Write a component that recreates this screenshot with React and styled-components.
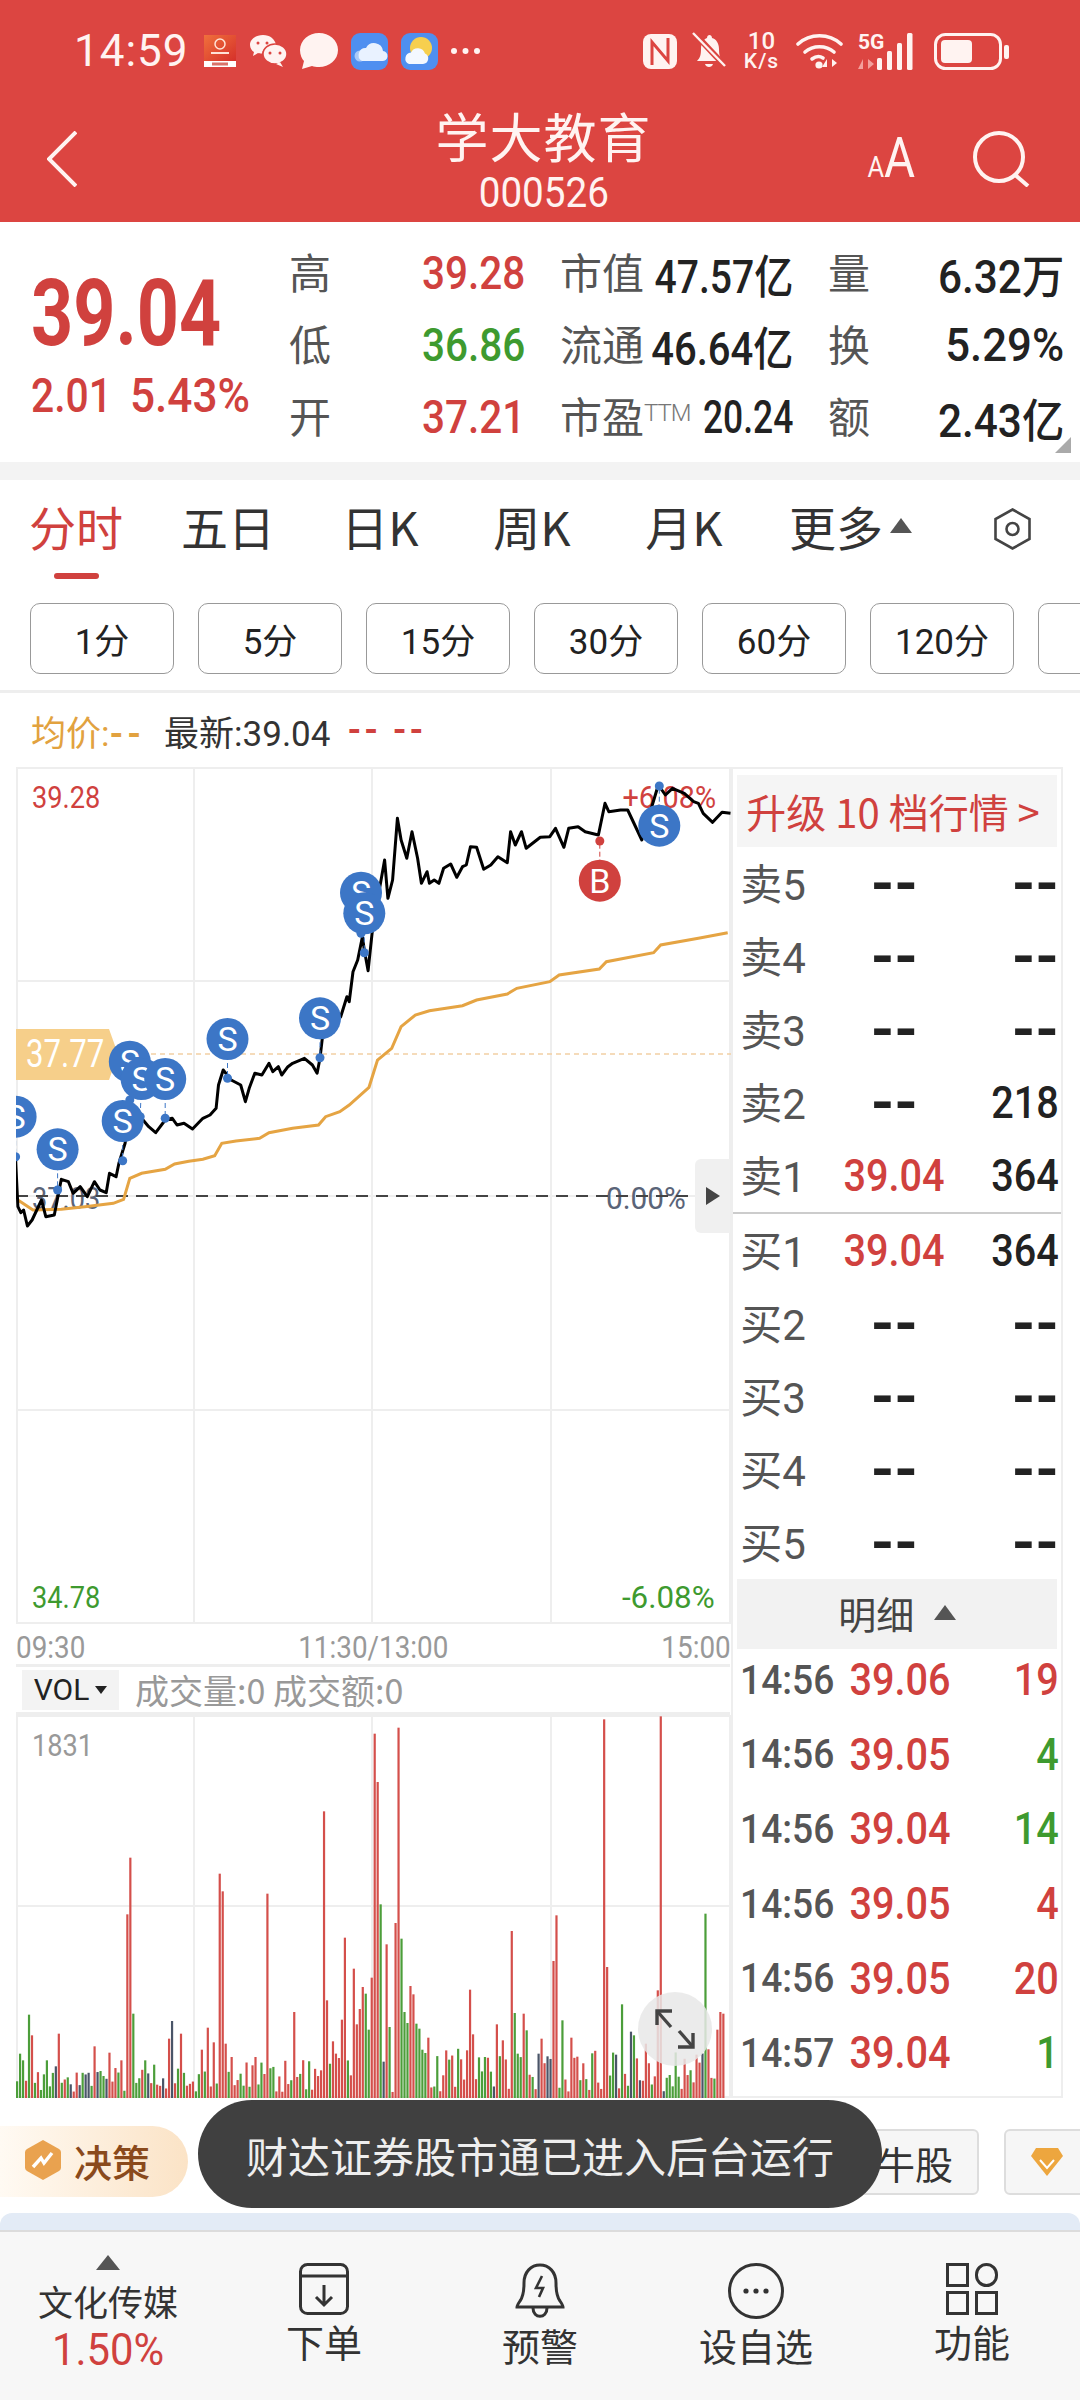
import React from 'react';
import styled, { createGlobalStyle, css } from 'styled-components';

const RED = '#d0413e';
const GREEN = '#3e9a2f';
const cjk = '"Noto Sans CJK SC", "Roboto", sans-serif';
const num = '"Roboto", "Noto Sans CJK SC", sans-serif';

// the app's digits are a condensed DIN face, so Roboto gets squeezed sideways
const squeeze = (sx, origin = 'left') => css`
  display: inline-block;
  white-space: nowrap;
  transform: scaleX(${sx});
  transform-origin: ${origin} center;
`;

const Global = createGlobalStyle`
  html, body { margin: 0; padding: 0; background: #fff; }
  * { box-sizing: border-box; }
`;

const Page = styled.div`
  width: 1080px;
  height: 2400px;
  overflow: hidden;
  background: #fff;
  font-family: ${cjk};
  color: #222;
`;

/* ---------- red header ---------- */
const Header = styled.header`
  height: 222px;
  background: #dc4541;
  color: #fff3f1;
`;
const StatusBar = styled.div`
  height: 102px;
  padding: 0 71px 0 74px;
  display: flex;
  align-items: center;
  justify-content: space-between;
`;
const StatusGroup = styled.div`
  display: flex;
  align-items: center;
  gap: ${p => p.$gap || 13}px;
`;
const Clock = styled.span`
  font: 400 44px ${num};
  letter-spacing: 1px;
  margin-right: 2px;
`;
const Speed = styled.div`
  width: 39px;
  font: 500 24px/19px ${num};
  text-align: center;
  span { font-size: 21px; letter-spacing: 1px; }
`;
const NavBar = styled.div`
  height: 120px;
  padding: 0 50px 10px 47px;
  display: grid;
  grid-template-columns: 1fr auto 1fr;
  align-items: center;
`;
const TitleBlock = styled.div`
  text-align: center;
  margin: 2px 0 0 10px;
`;
const Title = styled.div`
  font-size: 53px;
  line-height: 62px;
  letter-spacing: 1px;
`;
const Code = styled.div`
  font: 400 42px/46px ${num};
  margin-top: 4px;
  ${squeeze(0.92, 'center')}
`;
const NavActions = styled.div`
  display: flex;
  justify-content: flex-end;
  align-items: center;
  gap: 58px;
`;
const FontSizeMark = styled.div`
  font: 400 30px/56px ${num};
  color: #fff3f1;
  margin-top: 6px;
  ${squeeze(0.85, 'right')}
  span { font-size: 56px; }
`;

/* ---------- quote block ---------- */
const Quote = styled.section`
  position: relative;
  height: 240px;
  display: flex;
`;
const QuoteMain = styled.div`
  width: 289px;
  padding: 50px 0 0 31px;
  color: ${RED};
`;
const BigPrice = styled.div`
  font: 700 92px/84px ${num};
  ${squeeze(0.8)}
`;
const Change = styled.div`
  margin-top: 15px;
  display: flex;
  font: 500 48px/50px ${num};
`;
const ChangeValue = styled.span`
  width: ${p => p.$w}px;
  ${p => squeeze(p.$sx)}
`;
const Stats = styled.div`
  padding-top: 15px;
  display: grid;
  grid-template-columns: 236px 233px 236px;
  grid-auto-rows: 72px;
  column-gap: 35px;
`;
const Stat = styled.div`
  display: flex;
  align-items: center;
  justify-content: space-between;
`;
const StatLabel = styled.span`
  font-size: 42px;
  color: #555;
  white-space: nowrap;
  margin-top: -6px;
`;
const StatValue = styled.span`
  font: 500 46px ${num};
  color: ${p => p.$color || '#222'};
  margin-left: -40px;
  ${p => squeeze(p.$sx || 0.88, 'right')}
`;
const Sup = styled.sup`
  font: 300 24px ${num};
  color: #777;
  vertical-align: 12px;
  line-height: 0;
  letter-spacing: -1px;
`;
const Corner = styled.i`
  position: absolute;
  right: 9px;
  bottom: 9px;
  width: 0;
  height: 0;
  border-left: 16px solid transparent;
  border-bottom: 16px solid #aaa;
`;
const GapBand = styled.div`
  height: 18px;
  background: #f3f3f3;
`;

/* ---------- tabs ---------- */
const Tabs = styled.nav`
  height: 106px;
  padding-top: 18px;
  display: flex;
  align-items: flex-start;
`;
const Tab = styled.div`
  position: relative;
  width: 152px;
  text-align: center;
  font-size: 47px;
  line-height: 56px;
  color: ${p => (p.$active ? RED : '#333')};
  &::after {
    content: '';
    display: ${p => (p.$active ? 'block' : 'none')};
    position: absolute;
    left: 54px;
    top: 75px;
    width: 45px;
    height: 6px;
    border-radius: 3px;
    background: ${RED};
  }
`;
const UpMark = styled.i`
  display: inline-block;
  border-left: 11px solid transparent;
  border-right: 11px solid transparent;
  border-bottom: 15px solid #555;
`;
const TabCaret = styled(UpMark)`
  position: absolute;
  left: 130px;
  top: 20px;
`;
const TabIcon = styled.div`
  margin-left: 82px;
  margin-top: 10px;
`;
const Chips = styled.div`
  height: 107px;
  padding: 17px 0 0 30px;
  display: flex;
  gap: 24px;
  overflow: hidden;
  border-bottom: 3px solid #eee;
`;
const Chip = styled.div`
  flex: 0 0 144px;
  height: 71px;
  border: 1px solid #999;
  border-radius: 10px;
  display: flex;
  align-items: center;
  justify-content: center;
  font: 400 35px ${num};
  color: #222;
`;
const Legend = styled.div`
  height: 74px;
  padding-left: 31px;
  display: flex;
  align-items: center;
  font: 400 35px ${num};
  color: #333;
  white-space: pre;
`;
const LegendAvg = styled.span`
  color: #e2a23f;
  margin-right: 19px;
  b { font-weight: 700; letter-spacing: 4px; }
`;
const LegendDash = styled.span`
  color: ${RED};
  margin-left: 17px;
  font-weight: 700;
  letter-spacing: 3px;
`;

/* ---------- chart + order book ---------- */
const Board = styled.div`
  height: 1331px;
  padding: 0 17px 0 16px;
  display: flex;
`;
const ChartColumn = styled.div`
  width: 715px;
  display: flex;
  flex-direction: column;
`;
const ChartCanvas = styled.div`
  position: relative;
  height: ${p => p.$h}px;
  flex: none;
`;
const Plot = styled.svg`
  position: absolute;
  left: 0;
  top: 0;
`;
const ChartLabel = styled.span`
  position: absolute;
  font: 400 32px/36px ${num};
  color: ${p => p.$color};
  left: ${p => (p.$left !== undefined ? p.$left + 'px' : 'auto')};
  right: ${p => (p.$right !== undefined ? p.$right + 'px' : 'auto')};
  top: ${p => p.$top}px;
  ${p => squeeze(p.$sx || 0.85, p.$right !== undefined ? 'right' : 'left')}
`;
const PriceTag = styled.div`
  position: absolute;
  left: 0;
  top: 262px;
  width: 102px;
  height: 51px;
  background: #f6cf8a;
  clip-path: polygon(0 0, 93px 0, 102px 25px, 93px 51px, 0 51px);
`;
const PriceTagText = styled.span`
  margin-left: 10px;
  color: #fff;
  font: 400 38px/51px ${num};
  ${squeeze(0.82)}
`;
const Handle = styled.div`
  position: absolute;
  right: 0;
  top: 392px;
  width: 35px;
  height: 74px;
  background: #f0f0f0;
  border-radius: 6px 0 0 6px;
  display: flex;
  align-items: center;
  justify-content: center;
  &::before {
    content: '';
    border-top: 9px solid transparent;
    border-bottom: 9px solid transparent;
    border-left: 14px solid #444;
  }
`;
const TimeAxis = styled.div`
  height: 43px;
  padding-top: 5px;
  display: flex;
  align-items: center;
  justify-content: space-between;
  font: 400 32px ${num};
  color: #999;
  border-bottom: 3px solid #eee;
`;
const AxisTime = styled.span`
  ${p => squeeze(0.87, p.$origin)}
`;
const VolBar = styled.div`
  height: 48px;
  padding-left: 6px;
  display: flex;
  align-items: center;
  border-bottom: 3px solid #eee;
  font: 400 34px ${cjk};
  color: #999;
  white-space: pre;
`;
const VolSelect = styled.div`
  width: 97px;
  height: 40px;
  margin-right: 16px;
  background: #f3f3f3;
  color: #222;
  display: flex;
  align-items: center;
  justify-content: center;
  gap: 6px;
  font: 400 30px ${num};
  &::after {
    content: '';
    border-left: 6px solid transparent;
    border-right: 6px solid transparent;
    border-top: 8px solid #222;
  }
`;
const Expand = styled.div`
  position: absolute;
  right: 18px;
  bottom: 32px;
  width: 74px;
  height: 74px;
  border-radius: 50%;
  background: rgba(232, 232, 232, 0.85);
  display: flex;
  align-items: center;
  justify-content: center;
`;

const Book = styled.aside`
  width: 332px;
  margin-left: 1px;
  border: 2px solid #eee;
  padding: 6px 4px 0;
`;
const Upgrade = styled.div`
  height: 72px;
  background: #f5f5f5;
  display: flex;
  align-items: center;
  padding-left: 9px;
  color: ${RED};
  font: 400 40px ${cjk};
  white-space: nowrap;
`;
const Rows = styled.div`
  ${p => p.$divider && 'border-bottom: 2px solid #ccc; margin: 0 -4px; padding: 0 4px;'}
`;
const BookRow = styled.div`
  height: ${p => p.$h || 73}px;
  margin-right: -3px;
  display: grid;
  grid-template-columns: ${p => p.$cols || '95px 118px 1fr'};
  align-items: center;
  padding: 0 1px 0 3px;
`;
const RowLabel = styled.span`
  font: 400 42px ${num};
  color: #555;
  white-space: nowrap;
  margin-top: -4px;
`;
const RowTime = styled.span`
  font: 500 40px ${num};
  color: #555;
  ${squeeze(0.93)}
`;
const RowValue = styled.span`
  font: 500 ${p => (p.$dash ? 60 : 44)}px/50px ${num};
  color: ${p => p.$color || '#222'};
  text-align: ${p => p.$align};
  font-weight: ${p => (p.$dash ? 700 : 500)};
  ${p => squeeze(p.$dash ? 1 : 0.9, p.$align === 'right' ? 'right' : 'center')}
`;
const DetailBar = styled.div`
  height: 70px;
  padding-bottom: 4px;
  background: #f2f2f2;
  display: flex;
  align-items: center;
  justify-content: center;
  gap: 20px;
  font-size: 38px;
  color: #444;
`;
const TickList = styled.div`
  margin-top: -6px;
`;

/* ---------- bottom ---------- */
const ShortcutRow = styled.div`
  position: relative;
  height: 115px;
  padding-top: 28px;
  display: flex;
  align-items: flex-start;
  overflow: hidden;
`;
const DecisionPill = styled.div`
  flex: 0 0 188px;
  height: 71px;
  padding: 0 0 3px 24px;
  border-radius: 0 36px 36px 0;
  background: linear-gradient(90deg, #fffaf3, #fbe3c6);
  display: flex;
  align-items: center;
  gap: 12px;
  font-size: 38px;
  font-weight: 500;
  color: #8a4a1c;
`;
const ShortcutChip = styled.div`
  height: 66px;
  margin-top: 3px;
  flex: ${p => (p.$grow ? '1' : '0 0 100px')};
  margin-left: ${p => p.$gap}px;
  margin-right: ${p => p.$end || 0}px;
  padding: ${p => (p.$grow ? '0 24px 0 0' : '0 0 0 24px')};
  background: #f6f6f6;
  border: 2px solid #ddd;
  border-radius: 6px;
  display: flex;
  align-items: center;
  justify-content: ${p => (p.$grow ? 'flex-end' : 'flex-start')};
  font-size: 38px;
  color: #333;
`;
const Toast = styled.div`
  position: absolute;
  left: 198px;
  top: 2px;
  width: 684px;
  height: 108px;
  border-radius: 54px;
  background: #404040;
  color: #eee;
  font-size: 42px;
  display: flex;
  align-items: center;
  justify-content: center;
`;
const BlueStrip = styled.div`
  height: 17px;
  background: #e3ebf6;
  border-radius: 12px 12px 0 0;
`;
const BottomNav = styled.footer`
  height: 170px;
  background: #f7f7f7;
  border-top: 2px solid #dcdcdc;
  display: grid;
  grid-template-columns: repeat(5, 216px);
`;
const NavItem = styled.div`
  padding-top: 31px;
  display: flex;
  flex-direction: column;
  align-items: center;
  font-size: 38px;
  line-height: 52px;
  color: #333;
`;
const IndustryItem = styled.div`
  padding-top: 23px;
  display: flex;
  flex-direction: column;
  align-items: center;
  font-size: 35px;
  line-height: 48px;
  color: #333;
  &::before {
    content: '';
    margin-bottom: 7px;
    border-left: 12px solid transparent;
    border-right: 12px solid transparent;
    border-bottom: 15px solid #555;
  }
`;
const IndustryPct = styled.div`
  font: 400 44px/50px ${num};
  color: ${RED};
  ${squeeze(0.95, 'center')}
`;

/* ---------- data ---------- */
const toChart = ([x, y]) => [+(x / 2.119 - 16).toFixed(1), +(y / 3 + 760 - 767).toFixed(1)];
const toLine = pts => pts.map(toChart).map(p => p.join(',')).join(' ');

const priceLine = [[33,1200],[38,1340],[44,1358],[50,1350],[58,1398],[68,1380],[78,1350],[88,1320],[97,1370],[115,1365],[130,1258],[145,1265],[155,1300],[170,1280],[185,1310],[200,1265],[212,1290],[225,1298],[232,1240],[246,1250],[252,1210],[265,1150],[275,1050],[300,1075],[315,1100],[330,1118],[350,1080],[365,1075],[375,1095],[390,1090],[408,1107],[430,1075],[445,1065],[458,1045],[463,975],[473,930],[490,960],[510,975],[520,1025],[528,985],[540,940],[555,945],[570,910],[578,935],[590,920],[597,945],[610,920],[620,910],[645,895],[662,915],[672,940],[678,895],[683,835],[722,770],[735,710],[740,725],[748,635],[758,600],[768,530],[772,570],[780,632],[790,500],[815,300],[822,415],[832,360],[842,175],[850,240],[862,295],[873,215],[885,295],[893,370],[905,335],[910,370],[920,360],[930,370],[940,325],[955,312],[968,352],[980,320],[988,315],[997,260],[1010,262],[1025,328],[1040,315],[1055,290],[1075,308],[1082,215],[1092,255],[1105,215],[1115,265],[1145,232],[1165,230],[1177,205],[1195,262],[1205,205],[1225,200],[1240,215],[1268,225],[1282,130],[1290,155],[1315,150],[1330,150],[1360,240],[1395,75],[1410,105],[1425,85],[1450,100],[1470,125],[1480,130],[1490,160],[1510,187],[1530,157],[1548,160]];
const avgLine = [[38,1320],[70,1350],[130,1348],[180,1340],[240,1330],[262,1318],[275,1255],[300,1240],[350,1228],[370,1212],[400,1204],[430,1198],[455,1187],[470,1150],[500,1143],[550,1135],[570,1118],[620,1105],[675,1095],[690,1070],[720,1055],[740,1035],[782,982],[800,900],[830,865],[850,800],[880,765],[910,752],[980,737],[1010,720],[1075,702],[1095,685],[1165,665],[1185,645],[1270,627],[1285,605],[1385,578],[1400,555],[1480,535],[1542,518]];

// badge: circle centre, then the dot on the line it points to
const badges = [
  { c: [33,1070], d: [33,1190] },
  { c: [122,1168], d: [122,1290] },
  { c: [275,905], d: [275,1020] },
  { c: [300,957], d: [297,1070] },
  { c: [350,957], d: [350,1075] },
  { c: [260,1083], d: [260,1202] },
  { c: [482,837], d: [482,955] },
  { c: [678,775], d: [678,893] },
  { c: [765,398], d: [765,520] },
  { c: [772,460], d: [772,578] },
  { c: [1397,197], d: [1397,78] },
  { c: [1271,362], d: [1271,243], buy: true },
];

const spikes = [
  [66,1305,'r'],[122,1300,'r'],[198,1338,'r'],[229,1357,'r'],[254,1380,'r'],[267,942,'r'],[273,772,'r'],[355,1315,'r'],[381,1300,'r'],[437,1282,'r'],[450,1326,'r'],[425,1348,'r'],[463,820,'r'],[470,873,'r'],[476,1330,'r'],[488,1370,'r'],[538,1370,'r'],[564,880,'r'],[620,1235,'r'],[678,1410,'r'],[684,633,'r'],[690,1200,'r'],[703,1323,'r'],[722,1258,'r'],[728,1012,'r'],[747,1105,'r'],[753,1272,'r'],[760,1226,'r'],[766,1160,'r'],[785,1132,'r'],[791,400,'r'],[797,545,'r'],[816,1032,'r'],[835,968,'r'],[841,382,'r'],[866,1157,'r'],[873,1182,'r'],[905,1312,'r'],[987,1350,'r'],[993,1168,'r'],[999,1302,'r'],[1050,1272,'r'],[1063,1320,'r'],[1082,992,'r'],[1107,1240,'r'],[1144,1315,'r'],[1170,1082,'r'],[1176,945,'r'],[1208,1312,'r'],[1277,357,'r'],[1283,1100,'r'],[1365,1330,'r'],[1390,1170,'r'],[1397,348,'r'],[1517,1288,'r'],[1524,1235,'r'],[1530,1240,'r'],
  [58,1243,'g'],[40,1360,'g'],[46,1380,'g'],[97,1380,'g'],[280,1240,'g'],[305,1380,'g'],[323,1393,'g'],[375,1405,'g'],[772,1180,'g'],[779,1288,'g'],[804,912,'g'],[822,1280,'g'],[848,1015,'g'],[854,1235,'g'],[860,1268,'g'],[879,1270,'g'],[885,1285,'g'],[898,1358,'g'],[1025,1370,'g'],[1088,1238,'g'],[1094,1360,'g'],[1113,1290,'g'],[1189,1260,'g'],[1315,1212,'g'],[1492,940,'g'],[1340,1305,'g'],
  [116,1398,'d'],[361,1262,'d'],[1334,1294,'d'],[1302,1363,'d'],[1140,1360,'d'],[1157,1368,'d'],
];
const barColor = { r: '#d44f4b', g: '#4c9e3a', d: '#4a5568' };

function buildBars() {
  let s = 11;
  const rnd = () => (s = (s * 16807) % 2147483647) / 2147483647;
  const bars = [];
  for (let i = 0; i < 238; i++) {
    const mid = i < 60 ? 24 : i < 105 ? 32 : 44;
    const r = rnd();
    bars.push({ h: 6 + rnd() * mid, k: r < 0.5 ? 'g' : r < 0.93 ? 'r' : 'd' });
  }
  spikes.forEach(([zx, zy, k]) => {
    const i = Math.round((zx - 33.5) / 6.31);
    bars[i] = { h: (1493 - zy) / 3, k };
  });
  return bars;
}
const bars = buildBars();

const asks = [['卖5','--','--'],['卖4','--','--'],['卖3','--','--'],['卖2','--','218'],['卖1','39.04','364']];
const bids = [['买1','39.04','364'],['买2','--','--'],['买3','--','--'],['买4','--','--'],['买5','--','--']];
const ticks = [
  ['14:56','39.06','19',RED],['14:56','39.05','4',GREEN],['14:56','39.04','14',GREEN],
  ['14:56','39.05','4',RED],['14:56','39.05','20',RED],['14:57','39.04','1',GREEN],
];
const grid = [178, 356, 535];

/* ---------- drawings ---------- */
const BankIcon = () => (
  <svg width="32" height="32" viewBox="0 0 32 32">
    <defs>
      <linearGradient id="bank" x1="0" y1="0" x2="1" y2="1">
        <stop offset="0" stopColor="#f0703c" />
        <stop offset="1" stopColor="#d5302a" />
      </linearGradient>
    </defs>
    <rect width="32" height="26" fill="url(#bank)" />
    <rect y="26" width="32" height="6" fill="#fff" />
    <circle cx="16" cy="9" r="5" fill="none" stroke="#ffe3d6" strokeWidth="1.5" />
    <rect x="7" y="17" width="18" height="2" fill="#ffe3d6" />
    <rect x="8" y="27.5" width="16" height="3" fill="#d9736a" />
  </svg>
);
const WeChatIcon = () => (
  <svg width="38" height="34" viewBox="0 0 38 34">
    <path d="M14 1C7 1 1 5 1 11c0 3 2 6 4 7l-1 4 5-3c1 .3 2 .5 4 .5C14 13 21 11 27 11 26 5 21 1 14 1z" fill="#fff3f1" />
    <ellipse cx="26" cy="20" rx="12" ry="10" fill="#fff3f1" stroke="#dc4541" strokeWidth="1.5" />
    <path d="M31 28l3 5-7-3z" fill="#fff3f1" />
    <circle cx="9" cy="9" r="1.5" fill="#dc4541" />
    <circle cx="18" cy="9" r="1.5" fill="#dc4541" />
    <circle cx="21" cy="19" r="1.5" fill="#dc4541" />
    <circle cx="31" cy="19" r="1.5" fill="#dc4541" />
  </svg>
);
const BubbleIcon = () => (
  <svg width="38" height="38" viewBox="0 0 38 38">
    <path d="M19 1C9 1 0 8 0 18c0 5 2 9 4 11l-2 8 10-3c2 .6 4 1 7 1 10 0 19-7 19-17S29 1 19 1z" fill="#fff3f1" />
  </svg>
);
const CloudApp = () => (
  <svg width="37" height="37" viewBox="0 0 37 37">
    <rect width="37" height="37" rx="9" fill="#4f8ff0" />
    <circle cx="9" cy="23" r="5.5" fill="#a9c9f8" />
    <path d="M11 28h20a5 5 0 0 0 1-10 9 9 0 0 0-17-3 7 7 0 0 0-4 13z" fill="#e9f2ff" />
  </svg>
);
const WeatherApp = () => (
  <svg width="37" height="37" viewBox="0 0 37 37">
    <rect width="37" height="37" rx="9" fill="#4f8ff0" />
    <circle cx="20" cy="15" r="11" fill="#f7cf4e" />
    <path d="M8 31h14a5.5 5.5 0 0 0 2-10.5 7.5 7.5 0 0 0-14-1A6 6 0 0 0 8 31z" fill="#f4f8ff" />
  </svg>
);
const Dots = () => (
  <svg width="29" height="8" viewBox="0 0 29 8">
    <circle cx="3" cy="4" r="3" fill="#fff3f1" />
    <circle cx="14.5" cy="4" r="3" fill="#fff3f1" />
    <circle cx="26" cy="4" r="3" fill="#fff3f1" />
  </svg>
);
const NfcIcon = () => (
  <svg width="34" height="35" viewBox="0 0 34 35">
    <rect width="34" height="35" rx="8" fill="#fff3f1" />
    <path d="M9 31V8l16 19V4" fill="none" stroke="#dc4541" strokeWidth="3" />
  </svg>
);
const MuteIcon = () => (
  <svg width="35" height="38" viewBox="0 0 35 38">
    <path d="M5 29c3-3 4-6 4-12 0-6 3-10 6-11 0-4 5-4 5 0 4 1 7 5 7 11 0 6 1 9 4 12z" fill="#fff3f1" />
    <path d="M13 32h8c-1 4-7 4-8 0z" fill="#fff3f1" />
    <path d="M2 1l31 33" stroke="#dc4541" strokeWidth="6" />
    <path d="M1 1l32 33" stroke="#fff3f1" strokeWidth="2.4" />
  </svg>
);
const WifiIcon = () => (
  <svg width="47" height="36" viewBox="0 0 47 36">
    <g fill="none" stroke="#fff3f1" strokeWidth="3.6" strokeLinecap="round">
      <path d="M2 11c12-11 31-11 43 0" />
      <path d="M9 19c8-7 21-7 29 0" />
      <path d="M16 26c4-3 8-3 11-1" />
    </g>
    <circle cx="23" cy="32" r="3.6" fill="#fff3f1" />
    <path d="M31 34v-8l-5 8zM36 26v8l5-4z" fill="#fff3f1" />
  </svg>
);
const SignalIcon = () => (
  <svg width="61" height="38" viewBox="0 0 61 38">
    <text x="0" y="17" fontFamily="Roboto, sans-serif" fontWeight="700" fontSize="21" fill="#fff3f1">5G</text>
    <path d="M5 37v-10l-5 10zM10 27v10l6-5z" fill="#f3a09c" />
    <rect x="19" y="26" width="5" height="12" rx="1.5" fill="#fff3f1" />
    <rect x="29" y="19" width="5" height="19" rx="1.5" fill="#fff3f1" />
    <rect x="39" y="11" width="5" height="27" rx="1.5" fill="#fff3f1" />
    <rect x="49" y="1" width="5.5" height="37" rx="1.5" fill="#fff3f1" />
  </svg>
);
const BatteryIcon = () => (
  <svg width="75" height="37" viewBox="0 0 75 37">
    <rect x="1.5" y="1.5" width="65" height="34" rx="10" fill="none" stroke="#fff3f1" strokeWidth="3" />
    <rect x="7" y="7" width="31" height="23" rx="4" fill="#fff3f1" />
    <rect x="70" y="12" width="5" height="14" rx="2" fill="#fff3f1" />
  </svg>
);
const BackIcon = () => (
  <svg width="30" height="56" viewBox="0 0 30 56">
    <path d="M29 1L2 28l27 27" fill="none" stroke="#fff3f1" strokeWidth="4" />
  </svg>
);
const SearchIcon = () => (
  <svg width="57" height="56" viewBox="0 0 57 56">
    <circle cx="26" cy="26" r="24" fill="none" stroke="#fff3f1" strokeWidth="4" />
    <path d="M41 43l14 12" stroke="#fff3f1" strokeWidth="4" />
  </svg>
);
const HexIcon = () => (
  <svg width="37" height="42" viewBox="0 0 37 42">
    <path d="M18.5 1.5L35.5 11v20l-17 9.5L1.5 31V11z" fill="none" stroke="#444" strokeWidth="2.6" />
    <circle cx="18.5" cy="21" r="6" fill="none" stroke="#444" strokeWidth="2.6" />
  </svg>
);
const ExpandIcon = () => (
  <svg width="40" height="40" viewBox="0 0 40 40">
    <g fill="none" stroke="#444" strokeWidth="3.4">
      <path d="M2 16V2h15" />
      <path d="M2 2l14 16" />
      <path d="M38 24v14H23" />
      <path d="M38 38L24 22" />
    </g>
  </svg>
);
const DecisionIcon = () => (
  <svg width="38" height="40" viewBox="0 0 38 40">
    <path d="M19 0l16 9a4 4 0 0 1 2 3v16a4 4 0 0 1-2 3l-16 9-16-9a4 4 0 0 1-2-3V12a4 4 0 0 1 2-3z" fill="#e9a24f" />
    <path d="M9 27l8-9 3 5 8-10" fill="none" stroke="#fff" strokeWidth="3.4" />
  </svg>
);
const GemIcon = () => (
  <svg width="34" height="30" viewBox="0 0 34 30">
    <path d="M6 1h22l5 8-16 20L1 9z" fill="#eda63e" />
    <path d="M10 13l7 8 7-8" fill="none" stroke="#fff" strokeWidth="2" />
  </svg>
);
const OrderIcon = () => (
  <svg width="50" height="52" viewBox="0 0 50 52">
    <rect x="1.5" y="1.5" width="47" height="49" rx="7" fill="none" stroke="#333" strokeWidth="3" />
    <path d="M2 13h46M25 22v20M17 34l8 8 8-8" fill="none" stroke="#333" strokeWidth="3" />
  </svg>
);
const AlertIcon = () => (
  <svg width="50" height="56" viewBox="0 0 50 56">
    <path d="M5 38c3-4 4-8 4-18C9 9 16 2 25 2s16 7 16 18c0 10 1 14 4 18 2 3 3 5 3 6H2c0-1 1-3 3-6z" fill="none" stroke="#333" strokeWidth="3" />
    <path d="M18 45c0 11 14 11 14 0" fill="none" stroke="#333" strokeWidth="3" />
    <path d="M27 13l-6 12h7l-4 9" fill="none" stroke="#333" strokeWidth="2.6" />
  </svg>
);
const MoreIcon = () => (
  <svg width="56" height="56" viewBox="0 0 56 56">
    <circle cx="28" cy="28" r="26.5" fill="none" stroke="#333" strokeWidth="3" />
    <circle cx="18" cy="28" r="2.6" fill="#333" />
    <circle cx="28" cy="28" r="2.6" fill="#333" />
    <circle cx="38" cy="28" r="2.6" fill="#333" />
  </svg>
);
const GridIcon = () => (
  <svg width="52" height="52" viewBox="0 0 52 52">
    <g fill="none" stroke="#333" strokeWidth="3">
      <rect x="1.5" y="1.5" width="20" height="21" />
      <rect x="30.5" y="1.5" width="20" height="21" rx="10" />
      <rect x="1.5" y="29.5" width="20" height="21" />
      <rect x="30.5" y="29.5" width="20" height="21" />
    </g>
  </svg>
);

const PricePlot = () => (
  <Plot width="715" height="857">
    <polyline points={toLine(avgLine)} fill="none" stroke="#e5a443" strokeWidth="3" />
    <polyline points={toLine(priceLine)} fill="none" stroke="#000" strokeWidth="3" strokeLinejoin="round" />
    {badges.map((b, i) => {
      const [cx, cy] = toChart(b.c);
      const [dx, dy] = toChart(b.d);
      const fill = b.buy ? '#d0413e' : '#3c76c6';
      return (
        <g key={i}>
          <line x1={cx} y1={cy} x2={dx} y2={dy} stroke={fill} strokeWidth="1" strokeDasharray="5 3" />
          <circle cx={dx} cy={dy} r="4.5" fill={fill} />
          <circle cx={cx} cy={cy} r="21" fill={fill} />
          <text x={cx} y={cy + 12} textAnchor="middle" fontFamily="Roboto, sans-serif" fontSize="34" fill="#fff">
            {b.buy ? 'B' : 'S'}
          </text>
        </g>
      );
    })}
  </Plot>
);

const GridLines = ({ h, rows }) => (
  <Plot width="715" height={h}>
    <rect x="1" y="1" width="713" height={h - 2} fill="none" stroke="#eee" strokeWidth="2" />
    {grid.map(x => <line key={x} x1={x} x2={x} y1="0" y2={h} stroke="#eee" strokeWidth="2" />)}
    {rows.map(y => <line key={y} x1="0" x2="715" y1={y} y2={y} stroke="#eee" strokeWidth="2" />)}
  </Plot>
);

const VolumePlot = () => (
  <Plot width="715" height="383">
    {bars.map((b, i) => (
      <rect key={i} x={i * 2.98} y={383 - b.h} width="2.2" height={b.h} fill={barColor[b.k]} />
    ))}
  </Plot>
);

const QuoteRow = ({ label, price, qty, cols, h, color, Lead = RowLabel }) => (
  <BookRow $h={h} $cols={cols}>
    <Lead>{label}</Lead>
    <RowValue $align="center" $dash={price === '--'} $color={price === '--' ? '#222' : RED}>{price}</RowValue>
    <RowValue $align="right" $dash={qty === '--'} $color={color}>{qty}</RowValue>
  </BookRow>
);

export default function App() {
  return (
    <Page>
      <Global />
      <Header>
        <StatusBar>
          <StatusGroup>
            <Clock>14:59</Clock>
            <BankIcon />
            <WeChatIcon />
            <BubbleIcon />
            <CloudApp />
            <WeatherApp />
            <Dots />
          </StatusGroup>
          <StatusGroup $gap={15}>
            <NfcIcon />
            <MuteIcon />
            <Speed>10<br /><span>K/s</span></Speed>
            <WifiIcon />
            <SignalIcon />
            <BatteryIcon />
          </StatusGroup>
        </StatusBar>
        <NavBar>
          <BackIcon />
          <TitleBlock>
            <Title>学大教育</Title>
            <Code>000526</Code>
          </TitleBlock>
          <NavActions>
            <FontSizeMark>A<span>A</span></FontSizeMark>
            <SearchIcon />
          </NavActions>
        </NavBar>
      </Header>

      <Quote>
        <QuoteMain>
          <BigPrice>39.04</BigPrice>
          <Change>
            <ChangeValue $w={99} $sx={0.85}>2.01</ChangeValue>
            <ChangeValue $w={120} $sx={0.92}>5.43%</ChangeValue>
          </Change>
        </QuoteMain>
        <Stats>
          <Stat><StatLabel>高</StatLabel><StatValue $color={RED}>39.28</StatValue></Stat>
          <Stat><StatLabel>市值</StatLabel><StatValue $sx={0.85}>47.57亿</StatValue></Stat>
          <Stat><StatLabel>量</StatLabel><StatValue $sx={0.92}>6.32万</StatValue></Stat>
          <Stat><StatLabel>低</StatLabel><StatValue $color={GREEN}>36.86</StatValue></Stat>
          <Stat><StatLabel>流通</StatLabel><StatValue $sx={0.87}>46.64亿</StatValue></Stat>
          <Stat><StatLabel>换</StatLabel><StatValue $sx={0.95}>5.29%</StatValue></Stat>
          <Stat><StatLabel>开</StatLabel><StatValue $color={RED}>37.21</StatValue></Stat>
          <Stat><StatLabel>市盈<Sup>TTM</Sup></StatLabel><StatValue $sx={0.77}>20.24</StatValue></Stat>
          <Stat><StatLabel>额</StatLabel><StatValue $sx={0.92}>2.43亿</StatValue></Stat>
        </Stats>
        <Corner />
      </Quote>
      <GapBand />

      <Tabs>
        <Tab $active>分时</Tab>
        <Tab>五日</Tab>
        <Tab>日K</Tab>
        <Tab>周K</Tab>
        <Tab>月K</Tab>
        <Tab>更多<TabCaret /></Tab>
        <TabIcon><HexIcon /></TabIcon>
      </Tabs>
      <Chips>
        {['1分', '5分', '15分', '30分', '60分', '120分', ''].map((c, i) => <Chip key={i}>{c}</Chip>)}
      </Chips>
      <Legend>
        <LegendAvg>均价:<b>--</b></LegendAvg>
        最新:39.04
        <LegendDash>-- --</LegendDash>
      </Legend>

      <Board>
        <ChartColumn>
          <ChartCanvas $h={857}>
            <GridLines h={857} rows={[214, 429, 643]} />
            <ChartLabel $left={16} $top={12} $color={RED}>39.28</ChartLabel>
            <ChartLabel $right={14} $top={12} $color={RED} $sx={0.9}>+6.08%</ChartLabel>
            <ChartLabel $left={16} $top={413} $color="#5a6478">37.03</ChartLabel>
            <ChartLabel $right={44} $top={413} $color="#5a6478" $sx={0.93}>0.00%</ChartLabel>
            <ChartLabel $left={16} $top={812} $color={GREEN}>34.78</ChartLabel>
            <ChartLabel $right={16} $top={812} $color={GREEN} $sx={0.98}>-6.08%</ChartLabel>
            <Plot width="715" height="857">
              <line x1="0" x2="715" y1="287" y2="287" stroke="#f2cfa4" strokeWidth="1.5" strokeDasharray="5 4" />
              <line x1="0" x2="680" y1="429" y2="429" stroke="#444" strokeWidth="2" strokeDasharray="12 8" />
            </Plot>
            <PriceTag><PriceTagText>37.77</PriceTagText></PriceTag>
            <Handle />
            <PricePlot />
          </ChartCanvas>
          <TimeAxis>
            <AxisTime $origin="left">09:30</AxisTime>
            <AxisTime $origin="center">11:30/13:00</AxisTime>
            <AxisTime $origin="right">15:00</AxisTime>
          </TimeAxis>
          <VolBar>
            <VolSelect>VOL</VolSelect>
            成交量:0 成交额:0
          </VolBar>
          <ChartCanvas $h={383}>
            <GridLines h={383} rows={[191]} />
            <ChartLabel $left={16} $top={12} $color="#999">1831</ChartLabel>
            <VolumePlot />
            <Expand><ExpandIcon /></Expand>
          </ChartCanvas>
        </ChartColumn>

        <Book>
          <Upgrade>升级 10 档行情 &gt;</Upgrade>
          <Rows $divider>
            {asks.map(([l, p, q]) => <QuoteRow key={l} label={l} price={p} qty={q} />)}
          </Rows>
          {bids.map(([l, p, q]) => <QuoteRow key={l} label={l} price={p} qty={q} />)}
          <DetailBar>明细<UpMark /></DetailBar>
          <TickList>
            {ticks.map(([t, p, q, c], i) => (
              <QuoteRow key={i} label={t} price={p} qty={q} color={c} h={74.6} cols="101px 118px 1fr" Lead={RowTime} />
            ))}
          </TickList>
        </Book>
      </Board>

      <ShortcutRow>
        <DecisionPill><DecisionIcon />决策</DecisionPill>
        <ShortcutChip $grow $gap={40}>牛股</ShortcutChip>
        <ShortcutChip $gap={25} $end={-24}><GemIcon /></ShortcutChip>
        <Toast>财达证券股市通已进入后台运行</Toast>
      </ShortcutRow>
      <BlueStrip />
      <BottomNav>
        <IndustryItem>
          文化传媒
          <IndustryPct>1.50%</IndustryPct>
        </IndustryItem>
        <NavItem><OrderIcon />下单</NavItem>
        <NavItem><AlertIcon />预警</NavItem>
        <NavItem><MoreIcon />设自选</NavItem>
        <NavItem><GridIcon />功能</NavItem>
      </BottomNav>
    </Page>
  );
}
